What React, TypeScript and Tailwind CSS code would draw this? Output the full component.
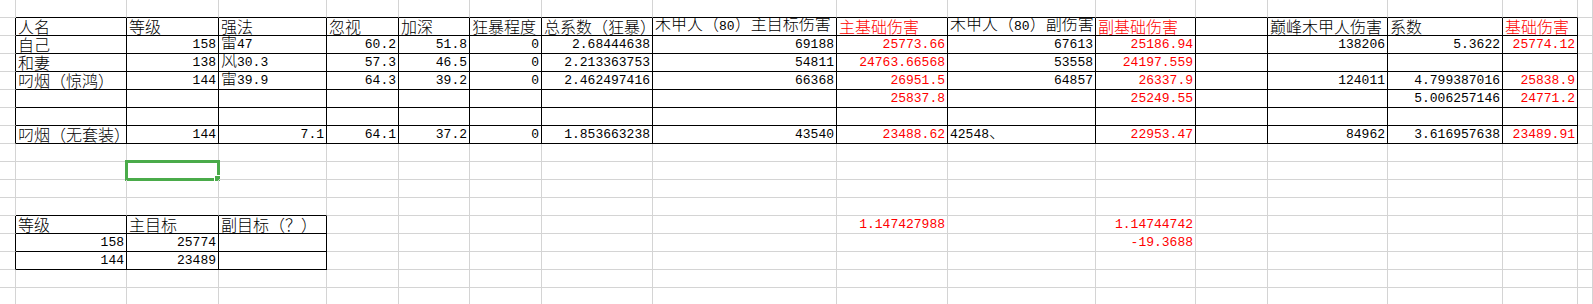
import React from 'react';

type Cell = [number, string, boolean?];

// sheet rows: [column, text, red]
const rows: Record<number, Cell[]> = {
  1: [
    [1, '人名'], [2, '等级'], [3, '强法'], [4, '忽视'], [5, '加深'], [6, '狂暴程度'],
    [7, '总系数（狂暴）'], [8, '木甲人（80）主目标伤害'], [9, '主基础伤害', true],
    [10, '木甲人（80）副伤害'], [11, '副基础伤害', true], [13, '巅峰木甲人伤害'], [14, '系数'], [15, '基础伤害', true],
  ],
  2: [
    [1, '自己'], [2, '158'], [3, '雷47'], [4, '60.2'], [5, '51.8'], [6, '0'], [7, '2.68444638'], [8, '69188'],
    [9, '25773.66', true], [10, '67613'], [11, '25186.94', true], [13, '138206'], [14, '5.3622'], [15, '25774.12', true],
  ],
  3: [
    [1, '和妻'], [2, '138'], [3, '风30.3'], [4, '57.3'], [5, '46.5'], [6, '0'], [7, '2.213363753'], [8, '54811'],
    [9, '24763.66568', true], [10, '53558'], [11, '24197.559', true],
  ],
  4: [
    [1, '叼烟（惊鸿）'], [2, '144'], [3, '雷39.9'], [4, '64.3'], [5, '39.2'], [6, '0'], [7, '2.462497416'], [8, '66368'],
    [9, '26951.5', true], [10, '64857'], [11, '26337.9', true], [13, '124011'], [14, '4.799387016'], [15, '25838.9', true],
  ],
  5: [[9, '25837.8', true], [11, '25249.55', true], [14, '5.006257146'], [15, '24771.2', true]],
  7: [
    [1, '叼烟（无套装）'], [2, '144'], [3, '7.1'], [4, '64.1'], [5, '37.2'], [6, '0'], [7, '1.853663238'], [8, '43540'],
    [9, '23488.62', true], [10, '42548、'], [11, '22953.47', true], [13, '84962'], [14, '3.616957638'], [15, '23489.91', true],
  ],
  12: [[1, '等级'], [2, '主目标'], [3, '副目标（？）'], [9, '1.147427988', true], [11, '1.14744742', true]],
  13: [[1, '158'], [2, '25774'], [11, '-19.3688', true]],
  14: [[1, '144'], [2, '23489']],
};

const inT1 = (r: number, c: number) => r >= 1 && r <= 7 && c >= 1 && c <= 15;
const inT2 = (r: number, c: number) => r >= 12 && r <= 14 && c >= 1 && c <= 3;

function rightBlack(r: number, c: number) {
  return inT1(r, c) || inT2(r, c) || (c === 0 && ((r >= 1 && r <= 7) || (r >= 12 && r <= 14)));
}
function bottomBlack(r: number, c: number) {
  return inT1(r, c) || inT2(r, c) || (r === 0 && c >= 1 && c <= 15) || (r === 11 && c >= 1 && c <= 3);
}

function Text({ t }: { t: string }) {
  const parts = t.match(/[\u3000-\u9fff\uff00-\uffef]+|[^\u3000-\u9fff\uff00-\uffef]+/g) ?? [];
  return (
    <>
      {parts.map((p, i) =>
        /[\u3000-\u9fff\uff00-\uffef]/.test(p) ? (
          <span key={i}>{p}</span>
        ) : (
          <span key={i} className="font-['Liberation_Mono',monospace] text-[13px]">{p}</span>
        )
      )}
    </>
  );
}

export default function App() {
  const cells = [];
  for (let r = 0; r < 17; r++) {
    for (let c = 0; c < 17; c++) {
      const data = rows[r]?.find((x) => x[0] === c);
      const num = data ? /^-?[\d.]+$/.test(data[1]) : false;
      const selected = r === 9 && c === 2;
      cells.push(
        <div
          key={`${r}-${c}`}
          className={`relative h-[18px] flex items-end whitespace-nowrap border-r border-b leading-[17px] px-[2px] ${
            selected ? 'overflow-visible' : 'overflow-hidden'
          } ${rightBlack(r, c) ? 'border-r-black' : 'border-r-[#d4d4d4]'} ${
            bottomBlack(r, c) ? 'border-b-black' : 'border-b-[#d4d4d4]'
          } ${num ? 'justify-end' : 'justify-start'} ${data?.[2] ? 'text-[#ff0000]' : 'text-black'}`}
        >
          {data && (
            <span>
              <Text t={data[1]} />
            </span>
          )}
          {selected && (
            <div className="absolute -left-[2px] -top-[2px] w-[95px] h-[21px] border-[3px] border-[#4aab4a]">
              <div className="absolute -right-[4px] -bottom-[4px] w-[7px] h-[7px] bg-[#4aab4a] border border-white" />
            </div>
          )}
        </div>
      );
    }
  }

  return (
    <div className="w-[1593px] h-[304px] overflow-hidden bg-white font-['Noto_Sans_CJK_SC',sans-serif] font-light text-[16px]">
      <div className="grid grid-cols-[16px_111px_92px_108px_72px_71px_72px_111px_184px_111px_148px_100px_72px_120px_115px_75px_1fr]">
        {cells}
      </div>
    </div>
  );
}
